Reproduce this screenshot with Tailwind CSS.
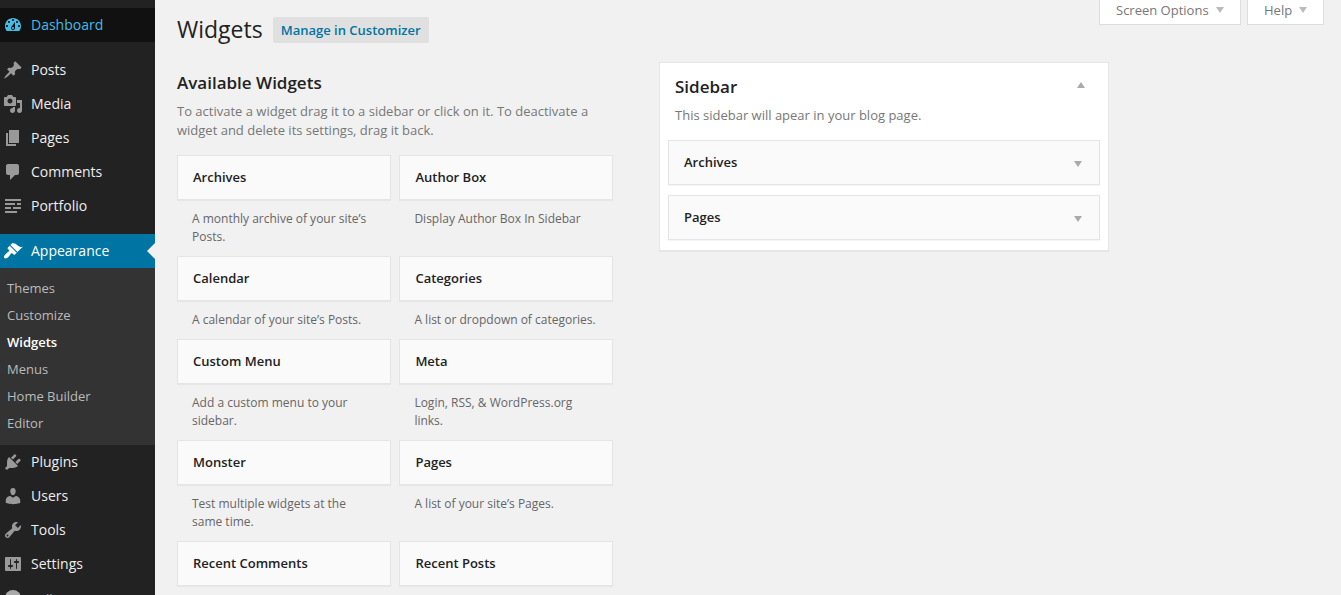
<!DOCTYPE html>
<html lang="en">
<head>
<meta charset="utf-8">
<title>Widgets</title>
<script src="https://cdn.jsdelivr.net/npm/@tailwindcss/browser@4"></script>
</head>
<body class="flex h-[595px] w-[1341px] overflow-hidden bg-[#f1f1f1] font-['Open_Sans',sans-serif] text-[13px] text-[#222]">
<nav class="h-full w-[155px] shrink-0 overflow-hidden bg-[#222] pt-2 text-sm text-[#eee]">
  <a class="mb-[11px] flex h-[34px] items-center gap-2 bg-[#111] pl-[3px] text-[#45bbe6]"><svg class="size-5 shrink-0" viewBox="0 0 20 20" fill="currentColor"><path d="M3.76 16h12.48c1.1-1.37 1.76-3.11 1.76-5 0-4.42-3.58-8-8-8s-8 3.58-8 8c0 1.89.66 3.63 1.76 5zM10 4c.55 0 1 .45 1 1s-.45 1-1 1-1-.45-1-1 .45-1 1-1zM6 6c.55 0 1 .45 1 1s-.45 1-1 1-1-.45-1-1 .45-1 1-1zm8 0c.55 0 1 .45 1 1s-.45 1-1 1-1-.45-1-1 .45-1 1-1zm-5.37 5.55L12 7v6c0 1.1-.9 2-2 2s-2-.9-2-2c0-.57.24-1.08.63-1.45zM4 10c.55 0 1 .45 1 1s-.45 1-1 1-1-.45-1-1 .45-1 1-1zm12 0c.55 0 1 .45 1 1s-.45 1-1 1-1-.45-1-1 .45-1 1-1zm-5 3c0-.55-.45-1-1-1s-1 .45-1 1 .45 1 1 1 1-.45 1-1z" fill-rule="evenodd"/></svg>Dashboard</a>
  <a class="flex h-[34px] items-center gap-2 pl-[3px]"><svg class="size-5 shrink-0 text-[#999]" viewBox="0 0 20 20" fill="currentColor"><path d="M10.44 3.02l1.82-1.82 6.36 6.35-1.83 1.82c-1.05-.68-2.48-.57-3.41.36l-.75.75c-.92.93-1.04 2.35-.35 3.41l-1.83 1.82-2.41-2.41-2.8 2.79c-.42.42-3.38 2.71-3.8 2.29s1.86-3.39 2.28-3.81l2.79-2.79L4.1 9.36l1.83-1.82c1.05.69 2.48.57 3.4-.36l.75-.75c.93-.92 1.05-2.35.36-3.41z"/></svg>Posts</a>
  <a class="flex h-[34px] items-center gap-2 pl-[3px]"><svg class="size-5 shrink-0 text-[#999]" viewBox="0 0 20 20" fill="currentColor"><path d="M13 11V4c0-.55-.45-1-1-1h-1.67L9 1H5L3.67 3H2c-.55 0-1 .45-1 1v7c0 .55.45 1 1 1h10c.55 0 1-.45 1-1zM7 4.5c1.38 0 2.5 1.12 2.5 2.5S8.38 9.5 7 9.5 4.5 8.38 4.5 7 5.62 4.5 7 4.5zM14 6h5v10.5c0 1.38-1.12 2.5-2.5 2.5S14 17.88 14 16.5s1.12-2.5 2.5-2.5c.17 0 .34.02.5.05V9h-3V6zm-4 8.05V13h2v3.5c0 1.38-1.12 2.5-2.5 2.5S7 17.88 7 16.5 8.12 14 9.5 14c.17 0 .34.02.5.05z" fill-rule="evenodd"/></svg>Media</a>
  <a class="flex h-[34px] items-center gap-2 pl-[3px]"><svg class="size-5 shrink-0 text-[#999]" viewBox="0 0 20 20" fill="currentColor"><path d="M6 15V2h10v13H6zm-1 1h8v2H3V5h2v11z"/></svg>Pages</a>
  <a class="flex h-[34px] items-center gap-2 pl-[3px]"><svg class="size-5 shrink-0 text-[#999]" viewBox="0 0 20 20" fill="currentColor"><path d="M5 2h9c1.1 0 2 .9 2 2v7c0 1.1-.9 2-2 2h-2l-5 5v-5H5c-1.1 0-2-.9-2-2V4c0-1.1.9-2 2-2z"/></svg>Comments</a>
  <a class="mb-[11px] flex h-[34px] items-center gap-2 pl-[3px]"><svg class="size-5 shrink-0 text-[#999]" viewBox="0 0 20 20" fill="currentColor"><path d="M2 3h16v2H2zM2 7h10v2H2zM14 7h4v2h-4zM2 11h6v2H2zM10 11h8v2h-8zM2 15h12v2H2z"/></svg>Portfolio</a>
  <a class="flex h-[34px] items-center gap-2 bg-[#0074a2] pl-[3px] text-white"><svg class="size-5 shrink-0" viewBox="0 0 20 20" fill="currentColor"><path d="M14.48 11.06L7.41 3.99l1.5-1.5c.5-.56 2.3-.47 3.51.32 1.21.8 1.43 1.28 2.91 2.1 1.18.64 2.45 1.26 4.45.85zm-.71.71L6.7 4.7 4.93 6.47c-.39.39-.39 1.02 0 1.41l1.06 1.06c.39.39.39 1.03 0 1.42-.6.6-1.43 1.11-2.21 1.69-.35.26-.7.53-1.01.84C1.43 14.23.4 16.08 1.4 17.07c.99 1 2.84-.03 4.18-1.36.31-.31.58-.66.85-1.02.57-.78 1.08-1.61 1.69-2.21.39-.39 1.02-.39 1.41 0l1.06 1.06c.39.39 1.02.39 1.41 0z"/></svg>Appearance<svg class="ml-auto h-4 w-2 shrink-0" viewBox="0 0 8 16" fill="#f1f1f1"><path d="M8 0v16L0 8z"/></svg></a>
  <div class="bg-[#333] pt-[7px] pb-2 pl-[7px] text-[13px] leading-[27px] text-[#bbb]">
    <a class="block">Themes</a>
    <a class="block">Customize</a>
    <a class="block font-semibold text-white">Widgets</a>
    <a class="block">Menus</a>
    <a class="block">Home Builder</a>
    <a class="block">Editor</a>
  </div>
  <a class="flex h-[34px] items-center gap-2 pl-[3px]"><svg class="size-5 shrink-0 text-[#999]" viewBox="0 0 20 20" fill="currentColor"><path d="M13.11 4.36L9.87 7.6 8 5.73l3.24-3.24c.35-.34 1.05-.2 1.56.32.52.51.66 1.21.31 1.55zm-8 1.77l.91-1.12 9.01 9.01-1.19.84c-.71.71-2.63 1.16-3.82 1.16H6.14L4.9 17.26c-.59.59-1.54.59-2.12 0-.59-.58-.59-1.53 0-2.12l1.24-1.24v-3.88c0-1.13.4-3.19 1.09-3.89zm7.26 3.97l3.24-3.24c.34-.35 1.04-.21 1.55.31.52.51.66 1.21.31 1.55l-3.24 3.25z"/></svg>Plugins</a>
  <a class="flex h-[34px] items-center gap-2 pl-[3px]"><svg class="size-5 shrink-0 text-[#999]" viewBox="0 0 20 20" fill="currentColor"><path d="M10 9.25c-2.27 0-2.73-3.44-2.73-3.44C7 4.02 7.82 2 9.97 2c2.16 0 2.98 2.02 2.71 3.81 0 0-.41 3.44-2.68 3.44zm0 2.57L12.72 10c2.39 0 4.52 2.33 4.52 4.53v2.49s-3.65 1.13-7.24 1.13c-3.65 0-7.24-1.13-7.24-1.13v-2.49c0-2.25 1.94-4.48 4.47-4.48z"/></svg>Users</a>
  <a class="flex h-[34px] items-center gap-2 pl-[3px]"><svg class="size-5 shrink-0 text-[#999]" viewBox="0 0 20 20" fill="currentColor"><path d="M16.68 9.77c-1.34 1.34-3.3 1.67-4.95.99l-5.41 6.52c-.99.99-2.59.99-3.58 0s-.99-2.59 0-3.57l6.52-5.42c-.68-1.65-.35-3.61.99-4.95 1.28-1.28 3.12-1.62 4.72-1.06l-2.89 2.89 2.82 2.82 2.86-2.87c.53 1.58.18 3.39-1.08 4.65zM3.81 16.21c.4.39 1.04.39 1.43 0 .4-.4.4-1.04 0-1.43-.39-.4-1.03-.4-1.43 0-.39.39-.39 1.03 0 1.43z" fill-rule="evenodd"/></svg>Tools</a>
  <a class="flex h-[34px] items-center gap-2 pl-[3px]"><svg class="size-5 shrink-0 text-[#999]" viewBox="0 0 20 20" fill="currentColor"><path d="M18 16V4c0-.55-.45-1-1-1H3c-.55 0-1 .45-1 1v12c0 .55.45 1 1 1h14c.55 0 1-.45 1-1zM8 11h1c.55 0 1 .45 1 1s-.45 1-1 1H8v1.5c0 .28-.22.5-.5.5s-.5-.22-.5-.5V13H6c-.55 0-1-.45-1-1s.45-1 1-1h1V5.5c0-.28.22-.5.5-.5s.5.22.5.5V11zm5-2h-1c-.55 0-1-.45-1-1s.45-1 1-1h1V5.5c0-.28.22-.5.5-.5s.5.22.5.5V7h1c.55 0 1 .45 1 1s-.45 1-1 1h-1v5.5c0 .28-.22.5-.5.5s-.5-.22-.5-.5V9z" fill-rule="evenodd"/></svg>Settings</a>
  <a class="flex h-[34px] items-center gap-[7px] pl-[3px] text-[13px] text-[#aaa]"><svg class="size-5 shrink-0 text-[#aaa]" viewBox="0 0 20 20" fill="currentColor"><circle cx="10" cy="10" r="8"/></svg><span class="pt-[3px]">Collapse menu</span></a>
</nav>
<main class="flex flex-1 pl-[22px]">
  <section class="w-[436px] shrink-0">
    <header class="flex items-center gap-[10px] pt-[13px]">
      <h1 class="mb-0.5 text-[23px] leading-[32px]">Widgets</h1>
      <a class="h-[26px] rounded-xs bg-[#e0e0e0] px-2 leading-[26px] font-semibold whitespace-nowrap text-[#0074a2]">Manage in Customizer</a>
    </header>
    <h2 class="mt-[24px] text-[17px] leading-6 font-semibold">Available Widgets</h2>
    <p class="mt-[7px] leading-[19px] whitespace-nowrap text-[#777]">To activate a widget drag it to a sidebar or click on it. To deactivate a<br>widget and delete its settings, drag it back.</p>
    <div class="mt-[15px] grid grid-cols-[214px_214px] gap-x-[8.4px] text-xs leading-[18px] text-[#666]">
      <div class="h-[101px]"><h3 class="h-[45px] border border-[#e5e5e5] bg-[#fafafa] pl-[15px] text-[13px] leading-[43px] font-semibold text-[#222] shadow-[0_1px_1px_rgba(0,0,0,0.04)]">Archives</h3><p class="pt-[10px] pl-[15px]">A monthly archive of your site’s<br>Posts.</p></div>
      <div class="h-[101px]"><h3 class="h-[45px] border border-[#e5e5e5] bg-[#fafafa] pl-[15px] text-[13px] leading-[43px] font-semibold text-[#222] shadow-[0_1px_1px_rgba(0,0,0,0.04)]">Author Box</h3><p class="pt-[10px] pl-[15px]">Display Author Box In Sidebar</p></div>
      <div class="h-[83px]"><h3 class="h-[45px] border border-[#e5e5e5] bg-[#fafafa] pl-[15px] text-[13px] leading-[43px] font-semibold text-[#222] shadow-[0_1px_1px_rgba(0,0,0,0.04)]">Calendar</h3><p class="pt-[10px] pl-[15px]">A calendar of your site’s Posts.</p></div>
      <div class="h-[83px]"><h3 class="h-[45px] border border-[#e5e5e5] bg-[#fafafa] pl-[15px] text-[13px] leading-[43px] font-semibold text-[#222] shadow-[0_1px_1px_rgba(0,0,0,0.04)]">Categories</h3><p class="pt-[10px] pl-[15px]">A list or dropdown of categories.</p></div>
      <div class="h-[101px]"><h3 class="h-[45px] border border-[#e5e5e5] bg-[#fafafa] pl-[15px] text-[13px] leading-[43px] font-semibold text-[#222] shadow-[0_1px_1px_rgba(0,0,0,0.04)]">Custom Menu</h3><p class="pt-[10px] pl-[15px]">Add a custom menu to your<br>sidebar.</p></div>
      <div class="h-[101px]"><h3 class="h-[45px] border border-[#e5e5e5] bg-[#fafafa] pl-[15px] text-[13px] leading-[43px] font-semibold text-[#222] shadow-[0_1px_1px_rgba(0,0,0,0.04)]">Meta</h3><p class="pt-[10px] pl-[15px]">Login, RSS, &amp; WordPress.org<br>links.</p></div>
      <div class="h-[101px]"><h3 class="h-[45px] border border-[#e5e5e5] bg-[#fafafa] pl-[15px] text-[13px] leading-[43px] font-semibold text-[#222] shadow-[0_1px_1px_rgba(0,0,0,0.04)]">Monster</h3><p class="pt-[10px] pl-[15px]">Test multiple widgets at the<br>same time.</p></div>
      <div class="h-[101px]"><h3 class="h-[45px] border border-[#e5e5e5] bg-[#fafafa] pl-[15px] text-[13px] leading-[43px] font-semibold text-[#222] shadow-[0_1px_1px_rgba(0,0,0,0.04)]">Pages</h3><p class="pt-[10px] pl-[15px]">A list of your site’s Pages.</p></div>
      <div><h3 class="h-[45px] border border-[#e5e5e5] bg-[#fafafa] pl-[15px] text-[13px] leading-[43px] font-semibold text-[#222] shadow-[0_1px_1px_rgba(0,0,0,0.04)]">Recent Comments</h3></div>
      <div><h3 class="h-[45px] border border-[#e5e5e5] bg-[#fafafa] pl-[15px] text-[13px] leading-[43px] font-semibold text-[#222] shadow-[0_1px_1px_rgba(0,0,0,0.04)]">Recent Posts</h3></div>
    </div>
  </section>
  <div class="ml-[46px] flex-1">
    <div class="flex h-[25px] justify-end gap-[6px] pr-[17px] leading-[20px] text-[#777]">
      <a class="flex w-[142px] border border-t-0 border-[#ddd] bg-white pl-4">Screen Options<svg class="mt-[7px] ml-[7px] h-[6px] w-2" viewBox="0 0 8 6" fill="#bbb"><path d="M0 0h8L4 6z"/></svg></a>
      <a class="flex w-[77px] border border-t-0 border-[#ddd] bg-white pl-4">Help<svg class="mt-[7px] ml-[7px] h-[6px] w-2" viewBox="0 0 8 6" fill="#bbb"><path d="M0 0h8L4 6z"/></svg></a>
    </div>
    <section class="mt-[37px] h-[189px] w-[450px] border border-[#e5e5e5] bg-white px-2 shadow-[0_1px_1px_rgba(0,0,0,0.04)]">
      <div class="flex justify-between pt-3 pr-[15px] pl-[7px]"><h2 class="text-[17px] leading-6 font-semibold">Sidebar</h2><svg class="mt-[7px] h-[6px] w-2" viewBox="0 0 8 6" fill="#aaa"><path d="M0 6h8L4 0z"/></svg></div>
      <p class="mt-[7px] pl-[7px] leading-[19px] text-[#777]">This sidebar will apear in your blog page.</p>
      <div class="mt-[15px] flex h-[45px] items-start justify-between border border-[#e5e5e5] bg-[#fafafa] pr-[17px] pl-[15px] leading-[43px] font-semibold shadow-[0_1px_1px_rgba(0,0,0,0.04)]">Archives<svg class="mt-5 h-[6px] w-2" viewBox="0 0 8 6" fill="#aaa"><path d="M0 0h8L4 6z"/></svg></div>
      <div class="mt-[10px] flex h-[45px] items-start justify-between border border-[#e5e5e5] bg-[#fafafa] pr-[17px] pl-[15px] leading-[43px] font-semibold shadow-[0_1px_1px_rgba(0,0,0,0.04)]">Pages<svg class="mt-5 h-[6px] w-2" viewBox="0 0 8 6" fill="#aaa"><path d="M0 0h8L4 6z"/></svg></div>
    </section>
  </div>
</main>
</body>
</html>
